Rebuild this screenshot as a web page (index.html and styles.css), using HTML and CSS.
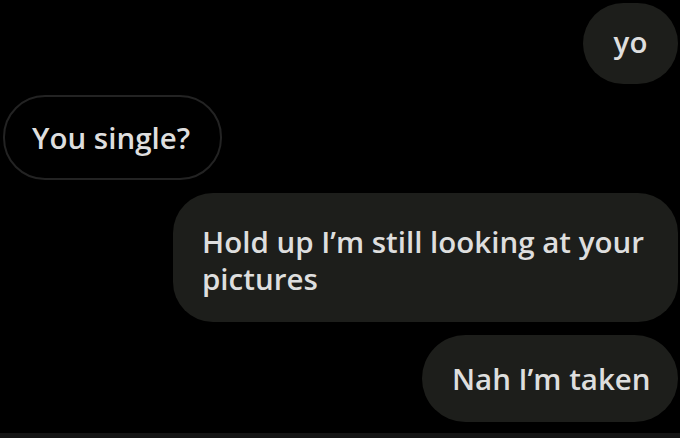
FILE: index.html
```html
<!DOCTYPE html>
<html>
<head>
<meta charset="utf-8">
<link rel="stylesheet" href="styles.css">
</head>
<body>
<div class="chat">
  <div class="row out"><div class="bubble yo">yo</div></div>
  <div class="row in"><div class="bubble incoming">You single?</div></div>
  <div class="row out"><div class="bubble long">Hold up I’m still looking at your pictures</div></div>
  <div class="row out"><div class="bubble nah">Nah I’m taken</div></div>
</div>
<div class="footer"></div>
</body>
</html>
```
FILE: styles.css
```css
html, body {
  margin: 0;
  padding: 0;
  background: #000;
}
body {
  width: 680px;
  height: 438px;
  overflow: hidden;
  display: flex;
  flex-direction: column;
  font-family: "Open Sans", Roboto, "Liberation Sans", sans-serif;
  font-weight: 600;
  color: #dedede;
}
.chat {
  flex: 1;
  display: flex;
  flex-direction: column;
  padding: 3px 2px 0 3px;
}
.row {
  display: flex;
}
.row.out { justify-content: flex-end; }
.row.in { justify-content: flex-start; }
.bubble {
  font-size: 29.5px;
  line-height: 37px;
  background: #1d1e1b;
  border-radius: 42px;
  box-sizing: border-box;
}
.yo {
  width: 95px;
  height: 81px;
  display: flex;
  align-items: center;
  justify-content: center;
  padding-bottom: 5px;
}
.incoming {
  margin-top: 11px;
  background: #000;
  border: 2px solid #232323;
  height: 85px;
  width: 219px;
  padding: 0 0 0 27px;
  display: flex;
  align-items: center;
}
.long {
  margin-top: 13px;
  width: 505px;
  padding: 30px 20px 25px 29px;
  border-radius: 40px;
}
.nah {
  margin-top: 13px;
  height: 87px;
  width: 256px;
  padding: 0 0 1px 30px;
  display: flex;
  align-items: center;
  border-radius: 44px;
}
.footer {
  height: 5px;
  background: #151515;
}
```
